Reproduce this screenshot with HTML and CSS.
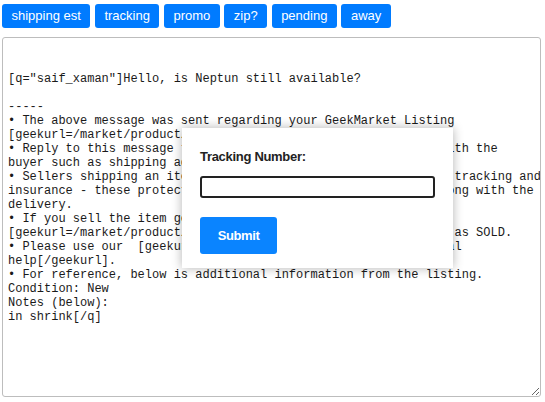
FILE: index.html
```html
<!DOCTYPE html>
<html>
<head>
<meta charset="utf-8">
<link rel="stylesheet" href="styles.css">
</head>
<body>
<div class="page">
  <div class="toolbar">
    <button class="tag">shipping est</button>
    <button class="tag">tracking</button>
    <button class="tag">promo</button>
    <button class="tag">zip?</button>
    <button class="tag">pending</button>
    <button class="tag">away</button>
  </div>
  <textarea class="message" wrap="off" spellcheck="false">


[q="saif_xaman"]Hello, is Neptun still available?

-----
• The above message was sent regarding your GeekMarket Listing
[geekurl=/market/product/2893344]Neptun[/geekurl]
• Reply to this message to communicate details of the trade with the
buyer such as shipping address and payment method.
• Sellers shipping an item are strongly encouraged to include tracking and
insurance - these protect you &amp; the buyer if anything goes wrong with the
delivery.
• If you sell the item go to your listing and mark it
[geekurl=/market/product/2893344]Neptun[/geekurl] listing now as SOLD.
• Please use our  [geekurl=/thread/20764241]GeekMarket tutorial
help[/geekurl].
• For reference, below is additional information from the listing.
Condition: New
Notes (below):
in shrink[/q]</textarea>
  <div class="modal">
    <label class="modal-label" for="tracking">Tracking Number:</label>
    <input class="modal-input" id="tracking" type="text">
    <button class="submit">Submit</button>
  </div>
</div>
</body>
</html>
```
FILE: styles.css
```css
html, body {
  margin: 0;
  padding: 0;
  background: #fff;
}

.page {
  position: relative;
  padding: 4px 2px 0 2px;
  font-family: "Liberation Sans", Arial, sans-serif;
}

.toolbar {
  display: flex;
  gap: 4.5px;
  height: 24px;
}

.tag {
  background: #007bff;
  color: #fff;
  border: 0;
  border-radius: 3px;
  font-family: "Liberation Sans", Arial, sans-serif;
  font-size: 13px;
  line-height: 16px;
  padding: 4px 9.5px;
  height: 24px;
  margin: 0;
}

.message {
  display: block;
  box-sizing: border-box;
  margin-top: 9px;
  width: 539px;
  height: 360px;
  padding: 6px 5px 5px 5px;
  border: 1px solid #bdbdbd;
  border-radius: 3px;
  font-family: "Liberation Mono", "Courier New", monospace;
  font-size: 12px;
  line-height: 14px;
  color: #1a1a1a;
  overflow: hidden;
  white-space: pre;
  outline: none;
}

.modal {
  position: absolute;
  left: 182px;
  top: 128px;
  width: 271px;
  height: 140px;
  box-sizing: border-box;
  padding: 21px 18px 0 18px;
  background: #fff;
  box-shadow: 0 0 10px rgba(0, 0, 0, 0.3);
  display: flex;
  flex-direction: column;
  align-items: flex-start;
}

.modal-label {
  font-weight: bold;
  font-size: 13px;
  line-height: 16px;
  letter-spacing: -0.3px;
  color: #222;
}

.modal-input {
  box-sizing: border-box;
  margin-top: 11px;
  width: 235px;
  height: 22px;
  border: 2px solid #222;
  border-radius: 3px;
  padding: 0 4px;
  outline: none;
}

.submit {
  margin-top: 19px;
  width: 77px;
  height: 37px;
  border: 0;
  border-radius: 3px;
  background: #0a84ff;
  color: #fff;
  font-family: "Liberation Sans", Arial, sans-serif;
  font-weight: bold;
  font-size: 13px;
  letter-spacing: -0.4px;
}
```
